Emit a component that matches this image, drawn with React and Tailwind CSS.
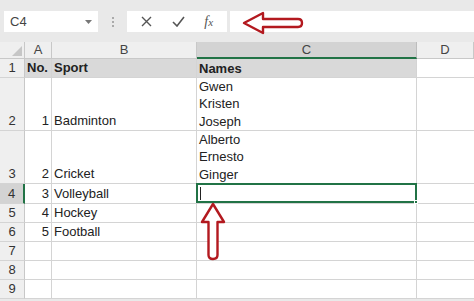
import React from 'react';

const cols = ['A', 'B', 'C', 'D'];

const rows = [
  { n: 1, h: 'h-[19px]', a: 'No.', b: 'Sport', c: ['Names'], head: true },
  { n: 2, h: 'h-[53px]', a: '1', b: 'Badminton', c: ['Gwen', 'Kristen', 'Joseph'] },
  { n: 3, h: 'h-[53px]', a: '2', b: 'Cricket', c: ['Alberto', 'Ernesto', 'Ginger'] },
  { n: 4, h: 'h-[20px]', a: '3', b: 'Volleyball', c: [], active: true },
  { n: 5, h: 'h-[19px]', a: '4', b: 'Hockey', c: [] },
  { n: 6, h: 'h-[19px]', a: '5', b: 'Football', c: [] },
  { n: 7, h: 'h-[19px]', a: '', b: '', c: [] },
  { n: 8, h: 'h-[19px]', a: '', b: '', c: [] },
  { n: 9, h: 'h-[19px]', a: '', b: '', c: [] },
];

const Toolbar = () => (
  <div className="h-[42px] bg-[#e9e9e9] flex items-center pl-[4px] gap-[3px] pt-[1px]">
    <div className="w-[94px] h-[21px] bg-white flex items-center justify-between px-[6px] text-[13px] text-[#444]">
      <span>C4</span>
      <svg width="7" height="4" viewBox="0 0 7 4"><path d="M0 0h7L3.5 4z" fill="#777" /></svg>
    </div>
    <div className="w-[23px] flex flex-col items-center gap-[2px]">
      <span className="w-[2px] h-[2px] bg-[#aaa]" />
      <span className="w-[2px] h-[2px] bg-[#aaa]" />
      <span className="w-[2px] h-[2px] bg-[#aaa]" />
    </div>
    <div className="w-[100px] h-[21px] bg-white flex items-center justify-around px-[4px]">
      <svg width="11" height="11" viewBox="0 0 11 11"><path d="M1 1l9 9M10 1l-9 9" stroke="#555" strokeWidth="1.4" /></svg>
      <svg width="13" height="11" viewBox="0 0 13 11"><path d="M1 6l4 4 7-9" stroke="#555" strokeWidth="1.6" fill="none" /></svg>
      <span className="italic text-[14px] text-[#555] font-['Liberation_Serif',serif] leading-none">f<span className="text-[11px]">x</span></span>
    </div>
    <div className="flex-1 h-[21px] bg-white" />
  </div>
);

export default function App() {
  return (
    <div className="relative w-[474px] h-[301px] overflow-hidden bg-white font-['Liberation_Sans',Arial,sans-serif] text-[13px] text-[#222]">
      <Toolbar />
      <div className="grid grid-cols-[25px_27px_145px_220px_57px]">
        <div className="h-[17px] bg-[#efefef] border-r border-b border-[#c8c8c8] flex items-end justify-end p-[2px]">
          <svg width="10" height="10" viewBox="0 0 10 10"><path d="M10 0v10H0z" fill="#c6c6c6" /></svg>
        </div>
        {cols.map(c => (
          <div
            key={c}
            className={c === 'C'
              ? 'h-[17px] bg-[#d3d3d3] border-r border-[#bdbdbd] border-b-2 border-b-[#217346] flex items-center justify-center text-[#444]'
              : 'h-[17px] bg-[#efefef] border-r border-b border-[#c8c8c8] flex items-center justify-center text-[#444]'}
          >
            {c}
          </div>
        ))}
        {rows.map(r => (
          <React.Fragment key={r.n}>
            <div className={`${r.h} ${r.active ? 'bg-[#d3d3d3] border-r-2 border-r-[#217346]' : 'bg-[#efefef] border-r border-r-[#c8c8c8]'} border-b border-b-[#d4d4d4] flex items-end justify-center text-[#333]`}>
              {r.n}
            </div>
            <div className={`${r.h} ${r.head ? 'bg-[#d9d9d9] font-bold' : ''} border-r border-b border-[#d4d4d4] flex items-end ${r.head ? 'justify-start pl-[2px]' : 'justify-end pr-[2px]'}`}>
              {r.a}
            </div>
            <div className={`${r.h} ${r.head ? 'bg-[#d9d9d9] font-bold' : ''} border-r border-b border-[#d4d4d4] flex items-end pl-[2px]`}>
              {r.b}
            </div>
            <div className={`${r.h} relative ${r.head ? 'bg-[#d9d9d9] font-bold' : ''} border-r border-b border-[#d4d4d4] flex flex-col justify-end pl-[2px] leading-[17.5px]`}>
              {r.c.map(t => <span key={t}>{t}</span>)}
              {r.active && (
                <div className="absolute -left-[1px] -top-[1px] -right-[1px] -bottom-[0px] border-2 border-[#217346]">
                  <span className="absolute left-[2px] top-[2px] w-[1px] h-[13px] bg-[#222]" />
                  <span className="absolute -right-[3px] -bottom-[3px] w-[4px] h-[4px] bg-[#217346] border border-white" />
                </div>
              )}
            </div>
            <div className={`${r.h} border-b border-[#d4d4d4]`} />
          </React.Fragment>
        ))}
      </div>
      <div className="h-[4px] bg-[#e9e9e9]" />

      <svg className="absolute left-[240px] top-[10px]" width="66" height="28" viewBox="0 0 66 28">
        <path d="M4 13 L23 3 L23 9 L58 9 Q62 9 62 13 Q62 17 58 17 L23 17 L23 23 Z" fill="white" stroke="#b3191f" strokeWidth="2.4" strokeLinejoin="round" />
      </svg>
      <svg className="absolute left-[198px] top-[200px]" width="32" height="64" viewBox="0 0 32 64">
        <path d="M15 4 L26 22 L19.5 22 L19.5 55 Q19.5 59 15 59 Q10.5 59 10.5 55 L10.5 22 L4 22 Z" fill="white" stroke="#b3191f" strokeWidth="2.4" strokeLinejoin="round" />
      </svg>
    </div>
  );
}
